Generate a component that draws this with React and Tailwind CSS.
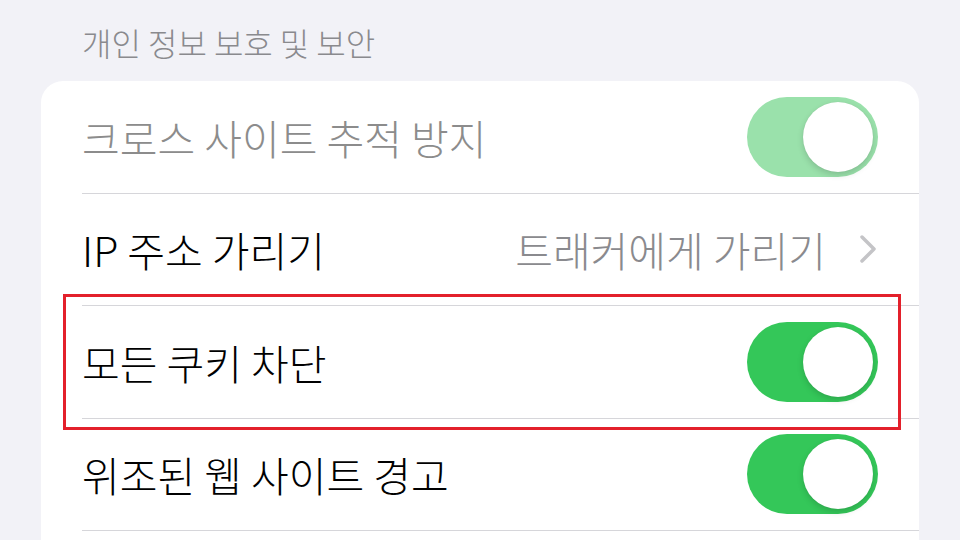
import React from "react";

const font = { fontFamily: '"Noto Sans CJK KR", "Noto Sans", sans-serif' };

function Toggle({ dim }) {
  return (
    <div
      className={`relative w-[131px] h-[80px] rounded-full flex items-center justify-end pr-[5px] ${
        dim ? "bg-[#9ae1ab]" : "bg-[#34c759]"
      }`}
    >
      <div className="w-[70px] h-[70px] rounded-full bg-white shadow-[0_3px_6px_rgba(0,0,0,0.15),0_0_1px_rgba(0,0,0,0.1)]" />
    </div>
  );
}

function Row({ children, last }) {
  return (
    <div className="pl-[41px]">
      <div
        className={`h-[112.5px] flex items-center justify-between pr-[41px] ${
          last ? "" : "border-b border-[#d6d6da]"
        }`}
      >
        {children}
      </div>
    </div>
  );
}

export default function App() {
  return (
    <div
      className="relative w-[960px] h-[540px] overflow-hidden bg-[#f2f2f7] font-light"
      style={font}
    >
      <div className="h-[81px] pl-[82px] pt-[22px] text-[32px] leading-[40px] text-[#8a8a8e]">
        개인 정보 보호 및 보안
      </div>
      <div className="ml-[41px] w-[878px] bg-white rounded-t-[22px]">
        <Row>
          <span className="text-[41px] leading-[50px] text-[#8c8c8c]">
            크로스 사이트 추적 방지
          </span>
          <Toggle dim />
        </Row>
        <Row>
          <span className="text-[41px] leading-[50px] text-black">
            IP 주소 가리기
          </span>
          <div className="flex items-center gap-[33px]">
            <span className="text-[41px] leading-[50px] text-[#8a8a8e]">
              트래커에게 가리기
            </span>
            <svg width="18" height="30" viewBox="0 0 18 30" className="mr-[1px]">
              <polyline
                points="3,3 15,15 3,27"
                fill="none"
                stroke="#c4c4c7"
                strokeWidth="3.5"
                strokeLinecap="round"
                strokeLinejoin="round"
              />
            </svg>
          </div>
        </Row>
        <Row>
          <span className="text-[41px] leading-[50px] text-black">
            모든 쿠키 차단
          </span>
          <Toggle />
        </Row>
        <Row>
          <span className="text-[41px] leading-[50px] text-black">
            위조된 웹 사이트 경고
          </span>
          <Toggle />
        </Row>
        <Row last>
          <span />
        </Row>
      </div>
      <div className="absolute left-[63px] top-[294px] w-[838px] h-[136px] border-[3px] border-[#e3202b] pointer-events-none" />
    </div>
  );
}
